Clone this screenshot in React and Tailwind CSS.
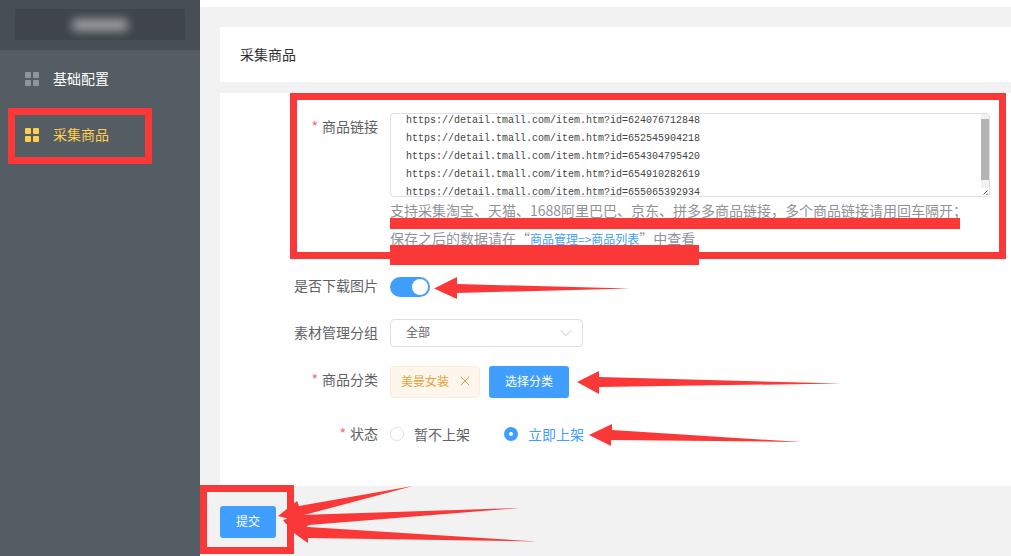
import React, { useEffect, useRef, useState } from 'react';
import { ChevronDown, X } from 'lucide-react';

const LINKS = [
  'https://detail.tmall.com/item.htm?id=624076712848',
  'https://detail.tmall.com/item.htm?id=652545904218',
  'https://detail.tmall.com/item.htm?id=654304795420',
  'https://detail.tmall.com/item.htm?id=654910282619',
  'https://detail.tmall.com/item.htm?id=655065392934',
].join('\n');

const MENU = [
  { label: '基础配置', active: false },
  { label: '采集商品', active: true },
];

function GridIcon({ className }) {
  return (
    <svg viewBox="0 0 14 14" className={className} fill="currentColor" aria-hidden="true">
      <rect x="0" y="0" width="6" height="6" rx="1" />
      <rect x="8" y="0" width="6" height="6" rx="1" />
      <rect x="0" y="8" width="6" height="6" rx="1" />
      <rect x="8" y="8" width="6" height="6" rx="1" />
    </svg>
  );
}

function Sidebar() {
  return (
    <aside className="w-[200px] shrink-0 bg-[#545c64]">
      <div className="h-[50px] bg-[#474e55] px-[15px] pt-[9px]">
        <div className="flex h-[31px] items-center justify-center bg-[#3f454b]">
          <div className="h-3 w-14 rounded-sm bg-[#9b9ea1] blur-[5px]" />
        </div>
      </div>
      <nav className="flex flex-col">
        {MENU.map((item) => (
          <a
            key={item.label}
            href="#"
            className={`relative flex h-14 items-center gap-[14px] pl-[25px] text-[14px] ${
              item.active ? 'text-[#ffd04b]' : 'text-white'
            }`}
          >
            <GridIcon className={`mt-[2px] size-[14px] ${item.active ? 'text-[#ffd04b]' : 'text-[#909399]'}`} />
            {item.label}
            {item.active && <span className="absolute top-[2px] right-12 -bottom-[2px] left-2 border-7 border-[#fb3838]" />}
          </a>
        ))}
      </nav>
    </aside>
  );
}

function Label({ required, children, ...props }) {
  return (
    <label {...props} className="w-[170px] shrink-0 pr-3 text-right leading-[26px]">
      {required && <span className="mr-1 text-[#f56c6c]">*</span>}
      {children}
    </label>
  );
}

function Arrow({ className, viewBox, points }) {
  return (
    <svg viewBox={viewBox} className={`pointer-events-none absolute ${className}`} fill="#fb3838" aria-hidden="true">
      {points.map((p) => (
        <polygon key={p} points={p} />
      ))}
    </svg>
  );
}

function Radio({ value, checked, onChange, children }) {
  return (
    <label className={`flex items-center gap-[10px] ${checked ? 'text-[#409eff]' : ''}`}>
      <input
        type="radio"
        name="status"
        value={value}
        checked={checked}
        onChange={() => onChange(value)}
        className="size-[14px] appearance-none rounded-full border border-[#dcdfe6] bg-white checked:border-5 checked:border-[#409eff]"
      />
      {children}
    </label>
  );
}

function App() {
  const linksRef = useRef(null);
  const [links, setLinks] = useState(LINKS);
  const [download, setDownload] = useState(true);
  const [status, setStatus] = useState('on');

  useEffect(() => {
    linksRef.current.scrollTop = 7;
  }, []);

  return (
    <div
      lang="zh-CN"
      className="flex min-h-screen overflow-hidden bg-[#f2f2f2] font-['Noto_Sans_CJK_SC',sans-serif] text-[14px] text-[#606266]"
    >
      <Sidebar />
      <main className="min-w-0 flex-1">
        <div className="h-[7px] bg-white" />
        <div className="pt-5 pl-5">
          <h1 className="bg-white px-5 py-[17px] leading-[21px] text-[#303133]">采集商品</h1>
          <form onSubmit={(e) => e.preventDefault()}>
            <div className="mt-[11px] flex flex-col gap-[19px] bg-white pt-5 pb-[38px]">
              <div className="relative flex max-w-[786px] pr-4">
                <Label htmlFor="links" required>
                  商品链接
                </Label>
                <div className="min-w-0 flex-1">
                  <div className="relative">
                    <textarea
                      id="links"
                      ref={linksRef}
                      value={links}
                      onChange={(e) => setLinks(e.target.value)}
                      className="block h-[84px] w-full resize-none rounded-[4px] border border-[#dcdfe6] px-[15px] py-[5px] font-['Liberation_Mono',monospace] text-[10px] leading-[18px] text-[#444]"
                    />
                    {/* scrollbar with resize corner */}
                    <div className="pointer-events-none absolute inset-y-px right-px flex w-2 flex-col overflow-hidden rounded-r-[3px] bg-[#f1f1f1] pt-[5px]">
                      <div className="h-[61px] bg-[#b4b4b4]" />
                      <svg viewBox="0 0 8 8" className="mt-auto size-2 bg-white" stroke="#555" aria-hidden="true">
                        <path d="M2.5 6.5l4-4M5.5 7l1.5-1.5" fill="none" />
                      </svg>
                    </div>
                  </div>
                  <p className="whitespace-nowrap text-[#909399]">
                    <span className="relative block h-7 leading-[26px]">
                      支持采集淘宝、天猫、1688阿里巴巴、京东、拼多多商品链接，多个商品链接请用回车隔开；
                      <span className="absolute -bottom-1 left-0 h-[11px] w-[570px] bg-[#fb3838]" />
                    </span>
                    <span className="relative block h-7 leading-[26px]">
                      保存之后的数据请在“
                      <a href="#" className="text-[12px] text-[#409eff]">
                        商品管理=&gt;商品列表
                      </a>
                      ”中查看
                      <span className="absolute top-5 left-0 z-10 h-5 w-[309px] bg-[#fb3838]" />
                    </span>
                  </p>
                </div>
                <span className="pointer-events-none absolute -top-5 right-0 -bottom-[6px] left-[70px] border-7 border-[#fb3838]" />
              </div>

              <div className="flex h-7">
                <Label htmlFor="download">是否下载图片</Label>
                <div className="relative mt-[5px] flex">
                  <input
                    id="download"
                    type="checkbox"
                    role="switch"
                    checked={download}
                    onChange={(e) => setDownload(e.target.checked)}
                    className="h-5 w-10 appearance-none rounded-full bg-[#dcdfe6] p-[2px] before:block before:size-4 before:rounded-full before:bg-white checked:bg-[#409eff] checked:before:ml-5"
                  />
                  <Arrow
                    className="top-0 left-11 h-[22px] w-[196px]"
                    viewBox="0 0 196 22"
                    points={['0,11.5 23,0 23,7 196,11.5 23,16 23,22']}
                  />
                </div>
              </div>

              <div className="flex h-7">
                <Label htmlFor="group">素材管理分组</Label>
                <div className="relative">
                  <select
                    id="group"
                    className="block h-7 w-[193px] appearance-none rounded-[4px] border border-[#dcdfe6] bg-white px-[15px] pb-[2px] text-[12px]"
                  >
                    <option>全部</option>
                  </select>
                  <ChevronDown
                    className="pointer-events-none absolute top-1 right-[7px] size-5 text-[#c0c4cc]"
                    strokeWidth={1.2}
                  />
                </div>
              </div>

              <div className="flex h-[35px]">
                <Label htmlFor="category" required>
                  商品分类
                </Label>
                <div className="relative flex h-8 gap-[9px] text-[12px]">
                  <span className="flex items-center gap-2 rounded-[4px] border border-[#faecd8] bg-[#fdf6ec] pr-[6px] pb-[2px] pl-[10px] text-[#e6a23c]">
                    美曼女装
                    <button type="button" aria-label="删除">
                      <X className="size-4" strokeWidth={1.5} />
                    </button>
                  </span>
                  <button
                    id="category"
                    type="button"
                    className="rounded-[3px] bg-[#409eff] px-4 pb-[2px] text-white"
                  >
                    选择分类
                  </button>
                  <Arrow
                    className="top-1 left-[187px] h-[24px] w-[264px]"
                    viewBox="0 0 264 24"
                    points={['0,12 22,1 22,7 264,13.5 22,17 22,24']}
                  />
                </div>
              </div>

              <div className="flex h-7">
                <Label id="status-label" required>
                  状态
                </Label>
                <div
                  role="radiogroup"
                  aria-labelledby="status-label"
                  className="relative flex h-7 gap-[34px] leading-[26px]"
                >
                  <Radio value="off" checked={status === 'off'} onChange={setStatus}>
                    暂不上架
                  </Radio>
                  <Radio value="on" checked={status === 'on'} onChange={setStatus}>
                    立即上架
                  </Radio>
                  <Arrow
                    className="top-1 left-[199px] h-[22px] w-[212px]"
                    viewBox="0 0 212 22"
                    points={['0,11 23,0 23,6 212,18 22,16 22,22']}
                  />
                </div>
              </div>
            </div>

            <div className="relative mt-5 w-fit">
              <button type="submit" className="block h-8 rounded-[3px] bg-[#409eff] px-4 pb-[2px] text-[12px] text-white">
                提交
              </button>
              <span className="pointer-events-none absolute -top-[21px] -right-[18px] -bottom-4 -left-5 border-7 border-[#fb3838]" />
              <Arrow
                className="-top-5 left-[58px] h-[60px] w-[262px]"
                viewBox="278 486 262 60"
                points={[
                  '278,516 297,501 299,506 413,486 304,515 300,522',
                  '283,520 300,515 519,508 309,525 303,529 286,524',
                  '288,529 294,524 308,527 537,541.5 308,538 308,543',
                ]}
              />
            </div>
          </form>
        </div>
      </main>
    </div>
  );
}

export default App;
